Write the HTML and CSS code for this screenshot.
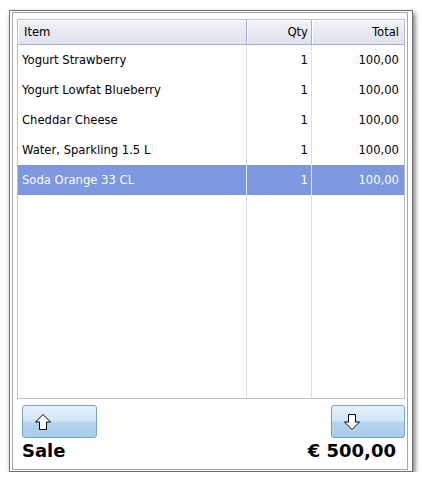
FILE: index.html
```html
<!DOCTYPE html>
<html>
<head>
<meta charset="utf-8">
<link rel="stylesheet" href="styles.css">
</head>
<body>
<div class="window">
  <div class="panel">
    <div class="list">
      <div class="row head">
        <div class="c item">Item</div>
        <div class="c qty">Qty</div>
        <div class="c total">Total</div>
      </div>
      <div class="row">
        <div class="c item">Yogurt Strawberry</div>
        <div class="c qty">1</div>
        <div class="c total">100,00</div>
      </div>
      <div class="row">
        <div class="c item">Yogurt Lowfat Blueberry</div>
        <div class="c qty">1</div>
        <div class="c total">100,00</div>
      </div>
      <div class="row">
        <div class="c item">Cheddar Cheese</div>
        <div class="c qty">1</div>
        <div class="c total">100,00</div>
      </div>
      <div class="row">
        <div class="c item">Water, Sparkling 1.5 L</div>
        <div class="c qty">1</div>
        <div class="c total">100,00</div>
      </div>
      <div class="row sel">
        <div class="c item">Soda Orange 33 CL</div>
        <div class="c qty">1</div>
        <div class="c total">100,00</div>
      </div>
      <div class="fill">
        <div class="fi"></div><div class="fq"></div><div class="ft"></div>
      </div>
    </div>
    <div class="buttons">
      <button class="btn"><svg width="16" height="16" viewBox="0 0 16 16"><path d="M8 0.5 L15.5 8 H11.5 V15.5 H4.5 V8 H0.5 Z" fill="#fff" stroke="#000" stroke-width="1"/></svg></button>
      <button class="btn"><svg width="16" height="16" viewBox="0 0 16 16"><path d="M8 15.5 L15.5 8 H11.5 V0.5 H4.5 V8 H0.5 Z" fill="#fff" stroke="#000" stroke-width="1"/></svg></button>
    </div>
    <div class="footer">
      <span class="sale">Sale</span>
      <span class="amount">€ 500,00</span>
    </div>
  </div>
</div>
</body>
</html>
```
FILE: styles.css
```css
html, body {
  margin: 0;
  padding: 0;
  background: #fff;
}
body {
  font-family: "DejaVu Sans", sans-serif;
  font-size: 11.6px;
  color: #000;
}
.window {
  margin: 10px 0 0 9px;
  width: 404px;
  height: 462px;
  box-sizing: border-box;
  border: 1px solid #6e6e6e;
  padding: 1px 4px 1px 2px;
  box-shadow: 2px 3px 5px rgba(0,0,0,0.55);
  background: #fff;
}
.panel {
  height: 458px;
  box-sizing: border-box;
  border: 1px solid #a8a8a8;
  padding: 6px 2px 0 4px;
  display: flex;
  flex-direction: column;
}
.list {
  height: 380px;
  flex: none;
  box-sizing: border-box;
  border: 1px solid #b9bde0;
  display: flex;
  flex-direction: column;
}
.row {
  display: grid;
  grid-template-columns: 229px 65px 1fr;
  height: 30px;
  align-items: stretch;
}
.c {
  display: flex;
  align-items: center;
  border-right: 1px solid #dcdff2;
  padding: 0 3px 0 4px;
  white-space: nowrap;
}
.c.total { border-right: none; padding-right: 5px; }
.qty, .total { justify-content: flex-end; }
.head {
  height: 24px;
  background: linear-gradient(#f1f2f8, #dfe2ee);
  border-bottom: 1px solid #a6acd6;
}
.head .c {
  border-right: 1px solid #a6acd6;
  box-shadow: inset 1px 1px 0 #fff;
  padding-left: 6px;
}
.head .c.total { border-right: none; }
.sel {
  background: #7b98e0;
  color: #fff;
}
.sel .c { border-right-color: #e6ebfa; }
.sel .c.total { border-right: none; }
.fill {
  flex: 1;
  display: grid;
  grid-template-columns: 229px 65px 1fr;
}
.fi, .fq { border-right: 1px solid #dcdff2; }
.buttons {
  display: flex;
  justify-content: space-between;
  padding: 6px 0 0 5px;
}
.btn {
  width: 75px;
  height: 33px;
  border: 1px solid #7ea3c9;
  border-radius: 3px;
  background: linear-gradient(#e6f1fb 0%, #d3e7f8 45%, #b3d4ef 55%, #a8cdeb 100%);
  padding: 0 0 0 12px;
  display: flex;
  align-items: center;
}
.btn + .btn { width: 74px; }
.footer {
  display: flex;
  justify-content: space-between;
  align-items: baseline;
  padding: 0 9px 0 5px;
  font-family: "DejaVu Sans", sans-serif;
  font-weight: bold;
  font-size: 18px;
  line-height: 26px;
}
```
